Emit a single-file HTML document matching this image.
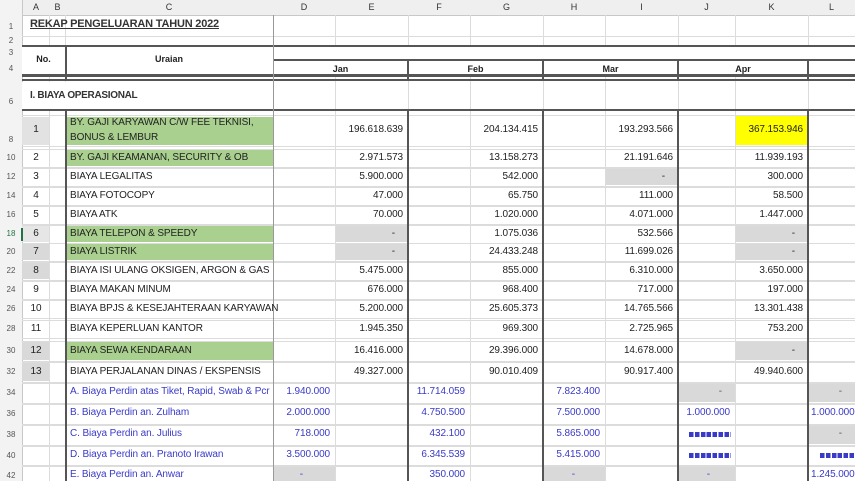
<!DOCTYPE html>
<html><head><meta charset="utf-8"><style>
body{margin:0;width:855px;height:481px;overflow:hidden;background:#fff;position:relative;font-family:"Liberation Sans",sans-serif;color:#222}
div{position:absolute}
.h{left:22px;right:0;height:1px;background:#dcdcdc}
.v{top:15px;bottom:0;width:1px;background:#dcdcdc}
.H{height:2px;background:#555}
.V{width:2px;background:#555}
.g{background:#a9d08e}
.s{background:#d9d9d9}
.t{font-size:10px;letter-spacing:-0.1px;line-height:12px;white-space:nowrap}
.n{font-size:10px;letter-spacing:-0.1px;line-height:12px;white-space:nowrap;text-align:right}
.b{color:#3a3ac8}
.rn{left:0;width:22px;text-align:center;font-size:8px;color:#555;line-height:10px}
.ch{top:0;height:15px;font-size:9px;line-height:15px;text-align:center;color:#333}
.hd{font-weight:bold;font-size:9px;text-align:center;line-height:12px}
.hs{height:5px;background:repeating-linear-gradient(90deg,#3a3ac8 0 4.5px,transparent 4.5px 5.9px)}
</style></head><body>
<div style="left:0;top:0;width:855px;height:15px;background:#efefef;border-bottom:1px solid #c8c8c8"></div>
<div style="left:0;top:0;width:22px;height:481px;background:#f3f3f3;border-right:1px solid #c8c8c8"></div>
<div class="ch" style="left:22px;width:28px">A</div>
<div class="ch" style="left:50px;width:15px">B</div>
<div class="ch" style="left:65px;width:208px">C</div>
<div class="ch" style="left:273px;width:62px">D</div>
<div class="ch" style="left:335px;width:73px">E</div>
<div class="ch" style="left:408px;width:62px">F</div>
<div class="ch" style="left:470px;width:73px">G</div>
<div class="ch" style="left:543px;width:62px">H</div>
<div class="ch" style="left:605px;width:73px">I</div>
<div class="ch" style="left:678px;width:57px">J</div>
<div class="ch" style="left:735px;width:73px">K</div>
<div class="ch" style="left:808px;width:47px">L</div>

<div class="g" style="left:65px;top:117px;width:208px;height:28px"></div>
<div style="left:22px;top:117px;width:28px;height:28px;background:#e2e2e2"></div>
<div style="left:735px;top:116px;width:73px;height:29px;background:#ffff00"></div>
<div class="g" style="left:65px;top:150px;width:208px;height:16px"></div>
<div class="g" style="left:65px;top:226px;width:208px;height:16px"></div>
<div class="g" style="left:65px;top:244px;width:208px;height:16px"></div>
<div class="g" style="left:65px;top:342px;width:208px;height:18px"></div>
<div style="left:22px;top:226px;width:28px;height:16px;background:#e6e6e6"></div>
<div class="s" style="left:22px;top:244px;width:28px;height:16px"></div>
<div class="s" style="left:22px;top:263px;width:28px;height:16px"></div>
<div class="s" style="left:22px;top:342px;width:28px;height:18px"></div>
<div class="s" style="left:22px;top:363px;width:28px;height:18px"></div>
<div class="s" style="left:336px;top:226px;width:71px;height:16px"></div>
<div class="s" style="left:336px;top:244px;width:71px;height:16px"></div>
<div class="s" style="left:606px;top:169px;width:71px;height:16px"></div>
<div class="s" style="left:736px;top:226px;width:71px;height:16px"></div>
<div class="s" style="left:736px;top:244px;width:71px;height:16px"></div>
<div class="s" style="left:736px;top:342px;width:71px;height:18px"></div>
<div class="s" style="left:679px;top:384px;width:56px;height:18px"></div>
<div class="s" style="left:809px;top:384px;width:46px;height:18px"></div>
<div class="s" style="left:809px;top:426px;width:46px;height:18px"></div>
<div class="s" style="left:274px;top:467px;width:61px;height:14px"></div>
<div class="s" style="left:544px;top:467px;width:61px;height:14px"></div>
<div class="s" style="left:679px;top:467px;width:56px;height:14px"></div>

<div class="v" style="left:49px"></div><div class="v" style="left:65px"></div>
<div class="v" style="left:273px;background:#999"></div><div class="v" style="left:335px"></div>
<div class="v" style="left:470px"></div><div class="v" style="left:605px"></div>
<div class="v" style="left:735px"></div><div class="v" style="left:408px"></div>
<div class="v" style="left:543px"></div><div class="v" style="left:678px"></div><div class="v" style="left:808px"></div>
<div class="h" style="top:36px"></div><div class="h" style="top:115px"></div><div class="h" style="top:146px"></div><div class="h" style="top:149px"></div>
<div class="h" style="top:167px"></div><div class="h" style="top:168px"></div>
<div class="h" style="top:186px"></div><div class="h" style="top:187px"></div>
<div class="h" style="top:205px"></div><div class="h" style="top:206px"></div>
<div class="h" style="top:224px"></div><div class="h" style="top:225px"></div>
<div class="h" style="top:243px"></div>
<div class="h" style="top:261px"></div><div class="h" style="top:262px"></div>
<div class="h" style="top:280px"></div><div class="h" style="top:281px"></div>
<div class="h" style="top:299px"></div><div class="h" style="top:300px"></div>
<div class="h" style="top:318px"></div><div class="h" style="top:320px"></div>
<div class="h" style="top:338px"></div><div class="h" style="top:341px"></div>
<div class="h" style="top:361px"></div><div class="h" style="top:362px"></div>
<div class="h" style="top:382px"></div><div class="h" style="top:383px"></div>
<div class="h" style="top:403px"></div><div class="h" style="top:404px"></div>
<div class="h" style="top:424px"></div><div class="h" style="top:425px"></div>
<div class="h" style="top:445px"></div><div class="h" style="top:446px"></div>
<div class="h" style="top:465px"></div><div class="h" style="top:466px"></div>
<div style="left:274px;top:47px;width:581px;height:12px;background:#fff"></div>
<div style="left:22px;top:47px;width:43px;height:27px;background:#fff"></div>
<div style="left:67px;top:47px;width:206px;height:27px;background:#fff"></div>
<div style="left:274px;top:61px;width:134px;height:13px;background:#fff"></div>
<div style="left:410px;top:61px;width:133px;height:13px;background:#fff"></div>
<div style="left:545px;top:61px;width:133px;height:13px;background:#fff"></div>
<div style="left:680px;top:61px;width:128px;height:13px;background:#fff"></div>
<div style="left:22px;top:82px;width:251px;height:28px;background:#fff"></div>

<div class="H" style="left:22px;right:0;top:45px"></div>
<div class="H" style="left:273px;right:0;top:59px"></div>
<div class="H" style="left:22px;right:0;top:74px;height:3px"></div>
<div class="H" style="left:22px;right:0;top:79px"></div>
<div class="H" style="left:22px;right:0;top:109px"></div>
<div class="V" style="left:65px;top:45px;height:36px"></div>
<div class="V" style="left:65px;top:110px;bottom:0"></div>
<div class="V" style="left:407px;top:59px;height:22px"></div><div class="V" style="left:407px;top:110px;bottom:0"></div>
<div class="V" style="left:542px;top:59px;height:22px"></div><div class="V" style="left:542px;top:110px;bottom:0"></div>
<div class="V" style="left:677px;top:59px;height:22px"></div><div class="V" style="left:677px;top:110px;bottom:0"></div>
<div class="V" style="left:807px;top:59px;height:22px"></div><div class="V" style="left:807px;top:110px;bottom:0"></div>
<div style="left:273px;top:15px;width:1px;bottom:0;background:#999"></div>

<div class="rn" style="top:22px">1</div><div class="rn" style="top:36px">2</div>
<div class="rn" style="top:48px">3</div><div class="rn" style="top:64px">4</div>
<div class="rn" style="top:97px">6</div><div class="rn" style="top:135px">8</div>
<div class="rn" style="top:153px">10</div><div class="rn" style="top:172px">12</div>
<div class="rn" style="top:191px">14</div><div class="rn" style="top:210px">16</div>
<div class="rn" style="top:229px;color:#217346">18</div><div class="rn" style="top:247px">20</div>
<div class="rn" style="top:266px">22</div><div class="rn" style="top:285px">24</div>
<div class="rn" style="top:304px">26</div><div class="rn" style="top:324px">28</div>
<div class="rn" style="top:346px">30</div><div class="rn" style="top:367px">32</div>
<div class="rn" style="top:388px">34</div><div class="rn" style="top:409px">36</div>
<div class="rn" style="top:430px">38</div><div class="rn" style="top:451px">40</div>
<div class="rn" style="top:471px">42</div>
<div style="left:21px;top:228px;width:2px;height:13px;background:#217346"></div>

<div style="left:30px;top:18px;font-size:11px;font-weight:bold;text-decoration:underline;letter-spacing:-0.2px;color:#333">REKAP PENGELUARAN TAHUN 2022</div>
<div class="hd" style="left:22px;width:43px;top:53px">No.</div>
<div class="hd" style="left:65px;width:208px;top:53px">Uraian</div>
<div class="hd" style="left:273px;width:135px;top:63px">Jan</div>
<div class="hd" style="left:408px;width:135px;top:63px">Feb</div>
<div class="hd" style="left:543px;width:135px;top:63px">Mar</div>
<div class="hd" style="left:678px;width:130px;top:63px">Apr</div>
<div style="left:30px;top:90px;font-size:10px;font-weight:bold;letter-spacing:-0.3px;color:#333">I. BIAYA OPERASIONAL</div>

<div class="n" style="left:22px;width:28px;text-align:center;top:124px">1</div>
<div class="t" style="left:70px;top:117px">BY. GAJI KARYAWAN C/W FEE TEKNISI,</div>
<div class="t" style="left:70px;top:132px">BONUS &amp; LEMBUR</div>
<div class="n" style="right:452px;top:124px">196.618.639</div>
<div class="n" style="right:317px;top:124px">204.134.415</div>
<div class="n" style="right:182px;top:124px">193.293.566</div>
<div class="n" style="right:52px;top:124px">367.153.946</div>

<div class="n" style="left:22px;width:28px;text-align:center;top:152px">2</div><div class="t" style="left:70px;top:152px">BY. GAJI KEAMANAN, SECURITY &amp; OB</div><div class="n" style="right:452px;top:152px">2.971.573</div><div class="n" style="right:317px;top:152px">13.158.273</div><div class="n" style="right:182px;top:152px">21.191.646</div><div class="n" style="right:52px;top:152px">11.939.193</div>
<div class="n" style="left:22px;width:28px;text-align:center;top:171px">3</div><div class="t" style="left:70px;top:171px">BIAYA LEGALITAS</div><div class="n" style="right:452px;top:171px">5.900.000</div><div class="n" style="right:317px;top:171px">542.000</div><div class="n" style="right:182px;top:171px;padding-right:8px">-</div><div class="n" style="right:52px;top:171px">300.000</div>
<div class="n" style="left:22px;width:28px;text-align:center;top:190px">4</div><div class="t" style="left:70px;top:190px">BIAYA FOTOCOPY</div><div class="n" style="right:452px;top:190px">47.000</div><div class="n" style="right:317px;top:190px">65.750</div><div class="n" style="right:182px;top:190px">111.000</div><div class="n" style="right:52px;top:190px">58.500</div>
<div class="n" style="left:22px;width:28px;text-align:center;top:209px">5</div><div class="t" style="left:70px;top:209px">BIAYA ATK</div><div class="n" style="right:452px;top:209px">70.000</div><div class="n" style="right:317px;top:209px">1.020.000</div><div class="n" style="right:182px;top:209px">4.071.000</div><div class="n" style="right:52px;top:209px">1.447.000</div>
<div class="n" style="left:22px;width:28px;text-align:center;top:228px">6</div><div class="t" style="left:70px;top:228px">BIAYA TELEPON &amp; SPEEDY</div><div class="n" style="right:452px;top:228px;padding-right:8px">-</div><div class="n" style="right:317px;top:228px">1.075.036</div><div class="n" style="right:182px;top:228px">532.566</div><div class="n" style="right:52px;top:228px;padding-right:8px">-</div>
<div class="n" style="left:22px;width:28px;text-align:center;top:246px">7</div><div class="t" style="left:70px;top:246px">BIAYA LISTRIK</div><div class="n" style="right:452px;top:246px;padding-right:8px">-</div><div class="n" style="right:317px;top:246px">24.433.248</div><div class="n" style="right:182px;top:246px">11.699.026</div><div class="n" style="right:52px;top:246px;padding-right:8px">-</div>
<div class="n" style="left:22px;width:28px;text-align:center;top:265px">8</div><div class="t" style="left:70px;top:265px">BIAYA ISI ULANG OKSIGEN, ARGON &amp; GAS</div><div class="n" style="right:452px;top:265px">5.475.000</div><div class="n" style="right:317px;top:265px">855.000</div><div class="n" style="right:182px;top:265px">6.310.000</div><div class="n" style="right:52px;top:265px">3.650.000</div>
<div class="n" style="left:22px;width:28px;text-align:center;top:284px">9</div><div class="t" style="left:70px;top:284px">BIAYA MAKAN MINUM</div><div class="n" style="right:452px;top:284px">676.000</div><div class="n" style="right:317px;top:284px">968.400</div><div class="n" style="right:182px;top:284px">717.000</div><div class="n" style="right:52px;top:284px">197.000</div>
<div class="n" style="left:22px;width:28px;text-align:center;top:303px">10</div><div class="t" style="left:70px;top:303px">BIAYA BPJS &amp; KESEJAHTERAAN KARYAWAN</div><div class="n" style="right:452px;top:303px">5.200.000</div><div class="n" style="right:317px;top:303px">25.605.373</div><div class="n" style="right:182px;top:303px">14.765.566</div><div class="n" style="right:52px;top:303px">13.301.438</div>
<div class="n" style="left:22px;width:28px;text-align:center;top:323px">11</div><div class="t" style="left:70px;top:323px">BIAYA KEPERLUAN KANTOR</div><div class="n" style="right:452px;top:323px">1.945.350</div><div class="n" style="right:317px;top:323px">969.300</div><div class="n" style="right:182px;top:323px">2.725.965</div><div class="n" style="right:52px;top:323px">753.200</div>
<div class="n" style="left:22px;width:28px;text-align:center;top:345px">12</div><div class="t" style="left:70px;top:345px">BIAYA SEWA KENDARAAN</div><div class="n" style="right:452px;top:345px">16.416.000</div><div class="n" style="right:317px;top:345px">29.396.000</div><div class="n" style="right:182px;top:345px">14.678.000</div><div class="n" style="right:52px;top:345px;padding-right:8px">-</div>
<div class="n" style="left:22px;width:28px;text-align:center;top:366px">13</div><div class="t" style="left:70px;top:366px">BIAYA PERJALANAN DINAS / EKSPENSIS</div><div class="n" style="right:452px;top:366px">49.327.000</div><div class="n" style="right:317px;top:366px">90.010.409</div><div class="n" style="right:182px;top:366px">90.917.400</div><div class="n" style="right:52px;top:366px">49.940.600</div>

<div class="t b" style="left:70px;top:386px;width:203px;overflow:hidden">A. Biaya Perdin atas Tiket, Rapid, Swab &amp; Pcr</div><div class="n b" style="right:525px;top:386px">1.940.000</div><div class="n b" style="right:390px;top:386px">11.714.059</div><div class="n b" style="right:255px;top:386px">7.823.400</div><div class="n b" style="right:125px;top:386px;padding-right:8px;color:#555">-</div><div class="n b" style="right:5px;top:386px;padding-right:8px;color:#555">-</div>
<div class="t b" style="left:70px;top:407px">B. Biaya Perdin an. Zulham</div><div class="n b" style="right:525px;top:407px">2.000.000</div><div class="n b" style="right:390px;top:407px">4.750.500</div><div class="n b" style="right:255px;top:407px">7.500.000</div><div class="n b" style="right:125px;top:407px">1.000.000</div><div class="n b" style="left:811px;top:407px;text-align:left">1.000.000</div>
<div class="t b" style="left:70px;top:428px">C. Biaya Perdin an. Julius</div><div class="n b" style="right:525px;top:428px">718.000</div><div class="n b" style="right:390px;top:428px">432.100</div><div class="n b" style="right:255px;top:428px">5.865.000</div><div class="hs" style="left:689px;width:42px;top:432px"></div><div class="n b" style="right:5px;top:428px;padding-right:8px;color:#555">-</div>
<div class="t b" style="left:70px;top:449px">D. Biaya Perdin an. Pranoto Irawan</div><div class="n b" style="right:525px;top:449px">3.500.000</div><div class="n b" style="right:390px;top:449px">6.345.539</div><div class="n b" style="right:255px;top:449px">5.415.000</div><div class="hs" style="left:689px;width:42px;top:453px"></div><div class="hs" style="left:820px;width:35px;top:453px"></div>
<div class="t b" style="left:70px;top:469px">E. Biaya Perdin an. Anwar</div><div class="n b" style="right:552px;top:469px">-</div><div class="n b" style="right:390px;top:469px">350.000</div><div class="n b" style="right:280px;top:469px">-</div><div class="n b" style="right:145px;top:469px">-</div><div class="n b" style="left:811px;top:469px;text-align:left">1.245.000</div>
</body></html>
